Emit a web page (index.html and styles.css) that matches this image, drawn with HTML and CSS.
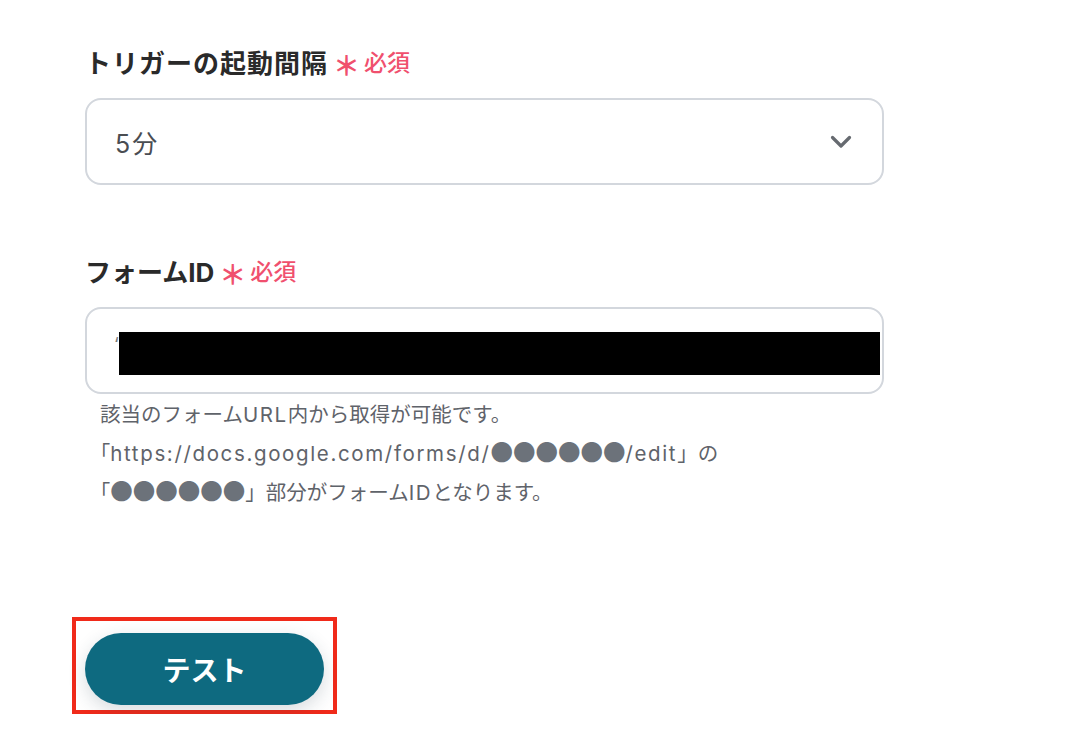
FILE: index.html
```html
<!DOCTYPE html>
<html>

	<head>
		<meta charset="UTF-8">
		<title>トリガー設定</title>
		<link rel="stylesheet" href="styles.css">
	</head>

	<body>
		<section class="form">
			<div class="field">
				<div class="label wide">トリガーの起動間隔<span class="mark">＊</span><span class="req">必須</span></div>
				<div class="select">
					<span class="value"><span class="en">5</span>分</span>
					<svg class="chevron" width="22" height="14" viewBox="0 0 22 14">
						<path d="M2.5 2.5 L11 11 L19.5 2.5" fill="none" stroke="#666a70" stroke-width="3.2" stroke-linecap="round" stroke-linejoin="round" />
					</svg>
				</div>
			</div>
			<div class="field">
				<div class="label">フォームID<span class="mark">＊</span><span class="req">必須</span></div>
				<div class="input">
					<span class="peek">&#8216;</span>
					<div class="mask"></div>
				</div>
				<div class="help">
					<p>該当のフォーム<span class="en">URL</span>内から取得が可能です。</p>
					<p>｢<span class="en">https://docs.google.com/forms/d/</span><span class="dots">●●●●●●</span><span class="en">/edit</span>」の</p>
					<p>｢<span class="dots">●●●●●●</span>」部分がフォーム<span class="en">ID</span>となります。</p>
				</div>
			</div>
			<div class="actions">
				<div class="highlight">
					<button class="btn">テスト</button>
				</div>
			</div>
		</section>
	</body>

</html>
```

FILE: styles.css
```css
* {
	margin: 0;
	padding: 0;
	box-sizing: border-box;
}

body {
	background-color: #fff;
	font-family: Inter, "Noto Sans CJK JP", sans-serif;
	color: #2b2b2b;
}

.form {
	width: 884px;
	padding: 42px 0 0 85px;
}

.field {
	margin-bottom: 66px;
}

.label {
	display: flex;
	align-items: center;
	height: 38px;
	font-size: 26px;
	font-weight: 700;
	color: #2a2a2a;
}
.label.wide {
	letter-spacing: 1px;
}
.mark {
	margin: 6px 4px 0 5px;
	font-size: 27px;
	font-weight: 700;
	letter-spacing: 0;
	color: #f0506e;
}
.req {
	font-size: 23px;
	font-weight: 500;
	letter-spacing: 0;
	color: #f0506e;
}

.select {
	display: flex;
	align-items: center;
	justify-content: space-between;
	margin-top: 18px;
	height: 87px;
	padding: 0 30px 0 28px;
	border: 2px solid #d3d7dd;
	border-radius: 16px;
}
.value {
	font-size: 25px;
	color: #4a4d52;
}

.input {
	display: flex;
	align-items: center;
	margin-top: 18px;
	height: 87px;
	padding: 0 2px 0 27px;
	border: 2px solid #d3d7dd;
	border-radius: 16px;
}
.peek {
	width: 5px;
	font-size: 18px;
	color: #777;
	margin-top: -12px;
}
.mask {
	flex: 1;
	height: 43px;
	margin-top: 6px;
	background-color: #000;
}

.help {
	padding: 2px 0 0 15px;
	font-size: 20.5px;
	line-height: 37px;
	color: #5f636a;
}
.en {
	letter-spacing: 0.08em;
}
.dots {
	font-family: "Noto Sans CJK JP", sans-serif;
	font-size: 22.5px;
	color: #6c727a;
}

.actions {
	padding-top: 40px;
}
.highlight {
	display: inline-block;
	margin-left: -13px;
	padding: 12px 9px 5px 9px;
	border: 4px solid #f02a1a;
}
.btn {
	display: block;
	width: 239px;
	height: 72px;
	border: none;
	border-radius: 36px;
	background-color: #0e6a80;
	color: #fff;
	font-family: Inter, "Noto Sans CJK JP", sans-serif;
	font-size: 28px;
	font-weight: 700;
	box-shadow: 0 6px 18px rgba(40, 60, 80, 0.18);
}
```
